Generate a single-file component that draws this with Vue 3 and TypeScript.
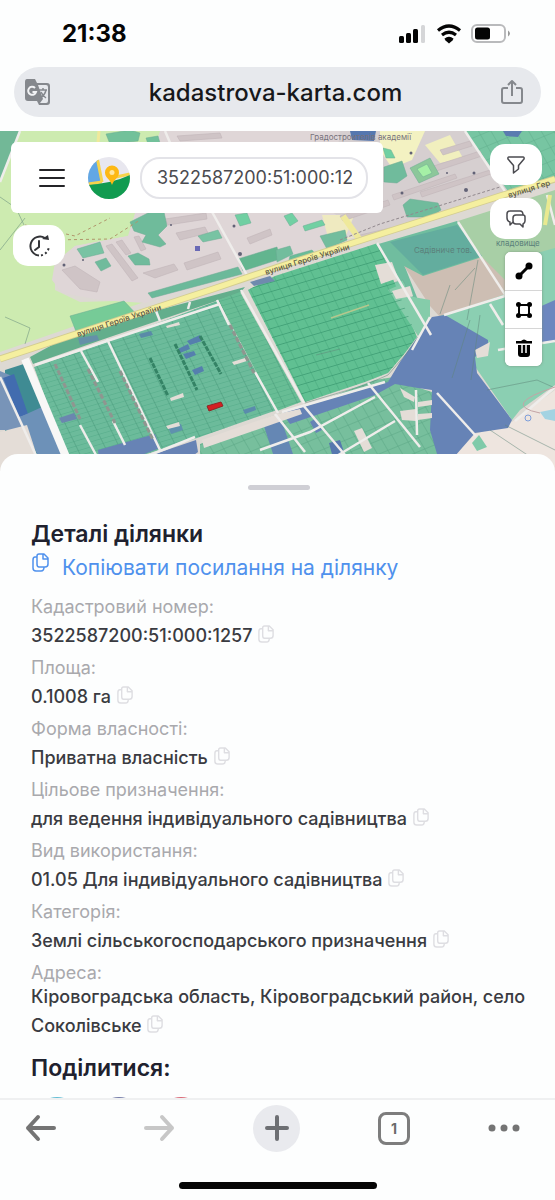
<script setup lang="ts">
import { ref } from 'vue'

interface Detail {
  id: string
  label: string
  value: string
}

interface Block {
  points: string
  fill: string
}

const cadastralNumber = ref('3522587200:51:000:1257')

const details: Detail[] = [
  { id: 'number', label: 'Кадастровий номер:', value: '3522587200:51:000:1257' },
  { id: 'area', label: 'Площа:', value: '0.1008 га' },
  { id: 'ownership', label: 'Форма власності:', value: 'Приватна власність' },
  { id: 'purpose', label: 'Цільове призначення:', value: 'для ведення індивідуального садівництва' },
  { id: 'use', label: 'Вид використання:', value: '01.05 Для індивідуального садівництва' },
  { id: 'category', label: 'Категорія:', value: 'Землі сільськогосподарського призначення' },
  { id: 'address', label: 'Адреса:', value: 'Кіровоградська область, Кіровоградський район, село Соколівське' },
]

const networks = [
  { id: 'telegram', name: 'Telegram' },
  { id: 'facebook', name: 'Facebook' },
  { id: 'pinterest', name: 'Pinterest' },
]

const terrain: Block[] = [
  { points: '0,131 165,131 200,131 150,210 140,215 128,236 75,246 55,265 55,290 80,302 150,300 0,352', fill: '#cdebb0' },
  { points: '0,131 20,131 0,180', fill: '#72b897' },
  { points: '128,236 75,246 55,262 52,280 62,293 100,300 145,303 275,262 365,235 385,131 160,131', fill: '#dfd6d7' },
  { points: '340,131 465,131 510,193 365,238 330,210', fill: '#d6cfd0' },
  { points: '380,131 425,131 412,160 392,168 380,150', fill: '#f3f2c2' },
  { points: '425,145 450,135 463,158 440,163', fill: '#f1efbe' },
  { points: '345,215 358,206 345,238 358,236 330,245 322,215', fill: '#efeac0' },
  { points: '465,131 555,131 555,178 510,194', fill: '#77c5a2' },
  { points: '458,221 555,190 555,265 508,284 482,258', fill: '#a8cfa6' },
  { points: '375,245 457,221 482,257 440,275 422,278 405,267 418,300 405,292', fill: '#70bd9f' },
  { points: '390,242 457,225 482,256 423,275', fill: '#63ad9e' },
  { points: '404,266 423,276 482,257 508,283 508,300 440,317 430,306', fill: '#cdbeb3' },
  { points: '440,316 555,278 555,385 520,410 512,420', fill: '#8bcfb2' },
  { points: '510,320 555,300 555,342 538,343', fill: '#6d87bf' },
  { points: '530,255 555,248 555,280 530,290', fill: '#8bcfb2' },
  { points: '512,422 555,390 555,471 440,471 475,434', fill: '#eee5df' },
  { points: '540,412 555,409 555,421 545,419', fill: '#a3d3e2' },
]

const greens: Block[] = [
  { points: '130,222 150,212 164,212 167,226 158,235 166,244 160,247 142,242 146,235 134,231', fill: '#6fbb9b' },
  { points: '106,134 130,130 140,133 138,141 110,144', fill: '#72c19a' },
  { points: '146,138 158,136 160,143 148,144', fill: '#72c19a' },
  { points: '77,249 100,242 104,253 83,258', fill: '#78c3a3' },
  { points: '95,262 106,258 111,266 101,271', fill: '#70bb9c' },
  { points: '128,256 138,253 149,259 150,265 135,265', fill: '#70bb9c' },
  { points: '198,236 218,230 222,238 203,242', fill: '#78c3a3' },
  { points: '235,215 247,213 251,223 240,226', fill: '#70cfa2' },
  { points: '148,293 238,267 242,274 152,298', fill: '#6bb99a' },
  { points: '238,259 277,247 280,259 243,271', fill: '#62b58f' },
  { points: '384,167 402,161 407,176 397,183 384,182', fill: '#70bb9c' },
  { points: '403,205 410,199 438,203 441,210 430,217 407,217', fill: '#70bb9c' },
  { points: '303,226 322,220 325,225 305,231', fill: '#71d0a3' },
  { points: '284,216 292,213 298,221 290,226', fill: '#71d0a3' },
  { points: '410,168 430,158 439,174 419,183', fill: '#8cc79a' },
  { points: '417,169 427,164 432,173 423,177', fill: '#a5f0a6' },
  { points: '383,148 391,150 395,158 386,158', fill: '#70d0a2' },
  { points: '70,316 124,301 140,318 77,334', fill: '#76cb97' },
  { points: '320,236 345,230 347,240 327,249', fill: '#72bd9d' },
  { points: '276,250 290,246 293,254 277,262', fill: '#72bd9d' },
  { points: '290,256 312,250 316,255 288,264', fill: '#69bc98' },
  { points: '386,285 403,280 407,290 393,294', fill: '#7fcaa9' },
]

const buildings = [
  '62,270 75,266 100,282 97,292 80,289', '106,246 112,244 138,278 132,281',
  '116,242 122,240 131,253 126,255', '134,237 139,236 146,249 141,251',
  '143,273 174,264 178,270 155,278', '176,233 205,227 208,233 180,240',
  '184,263 218,252 221,259 187,270', '165,219 206,213 207,219 168,225',
  '247,238 270,229 272,235 250,244', '177,136 220,133 222,138 180,141',
  '392,195 455,174 457,178 394,200', '415,172 480,151 482,156 418,177',
  '420,192 490,170 491,174 422,197', '440,150 470,141 472,146 443,155',
  '340,216 388,200 390,205 343,221', '360,235 390,228 391,232 362,239',
]

const fields: Block[] = [
  { points: '5,370 30,362 65,471 5,471', fill: '#3f8b93' },
  { points: '30,357 76,332 245,287 240,293 107,338 33,364', fill: '#63ae8c' },
  { points: '34,367 78,352 107,342 217,301 277,410 197,438 93,471 72,471', fill: '#6cbb9b' },
  { points: '218,300 240,292 301,402 277,411', fill: '#68bd95' },
  { points: '248,290 275,276 378,243 417,337 405,353 388,373 365,382 305,402', fill: '#60c092' },
  { points: '388,290 404,283 408,296 430,300 430,320 418,336', fill: '#85ccaa' },
  { points: '200,444 275,415 302,408 375,380 400,376 420,388 440,395 440,471 200,471', fill: '#77bf9d' },
]

const blues: Block[] = [
  { points: '0,371 12,376 33,430 0,430', fill: '#7894b8' },
  { points: '3,378 14,374 28,414 19,417', fill: '#426caf' },
  { points: '20,417 42,407 68,460 40,460', fill: '#6d91b8' },
  { points: '59,418 74,413 77,419 62,423', fill: '#6b86af' },
  { points: '139,334 151,331 153,335 141,338', fill: '#5a8aa8' },
  { points: '187,341 200,335 202,341 190,345', fill: '#557fae' },
  { points: '178,349 188,344 190,349 180,353', fill: '#557fae' },
  { points: '183,354 194,351 196,355 186,359', fill: '#557fae' },
  { points: '192,370 202,366 204,371 195,375', fill: '#557fae' },
  { points: '243,410 255,406 256,410 245,414', fill: '#5a8bac' },
  { points: '168,427 181,424 183,430 171,434', fill: '#5f91ae' },
  { points: '78,338 97,335 99,340 80,345', fill: '#6590a8' },
  { points: '98,450 155,434 160,448 100,471', fill: '#6783b5' },
  { points: '152,455 196,440 198,452 190,458 150,458', fill: '#6783b5' },
  { points: '263,423 280,416 295,460 275,460', fill: '#6587b4' },
  { points: '282,413 388,382 400,362 432,317 445,315 488,340 488,347 475,357 477,373 512,420 508,428 475,433 442,471 430,430 432,390 418,388 395,384 375,395 290,424', fill: '#6683b6' },
  { points: '310,422 316,418 322,430 316,433', fill: '#6683b6' },
  { points: '329,443 340,440 345,455 333,458', fill: '#5678ae' },
  { points: '250,282 270,276 275,281 254,286', fill: '#6f8aae' },
  { points: '350,131 376,131 374,141 352,140', fill: '#5577af' },
  { points: '503,131 522,131 518,137 506,136', fill: '#5a7bb0' },
]

const paleParcels = [
  '170,398 183,393 184,397 171,401', '166,426 179,422 180,426 168,429',
  '232,362 245,358 247,361 234,365', '166,326 179,322 180,325 167,328',
  '202,440 277,414 300,409 302,414 204,448', '375,265 392,262 398,278 381,284',
  '392,291 410,286 413,296 396,299', '400,388 415,397 414,402 404,397',
  '400,411 416,409 416,421 402,420', '418,402 432,400 432,405 418,407',
  '418,414 432,413 432,418 418,420', '354,431 362,428 372,448 364,452',
  '0,432 27,425 42,471 0,471', '475,350 490,342 488,356 477,358',
]

const whiteRoads = [
  'M25,359 L72,471', 'M35,365 L107,341 L220,304', 'M81,351 L98,382', 'M107,339 L160,450',
  'M80,425 L96,455', 'M113,421 L125,445', 'M0,377 L38,460', 'M217,300 L229,325',
  'M255,372 L278,413', 'M241,290 L304,403', 'M165,131 L180,166', 'M211,210 L248,277',
  'M377,243 L431,335', 'M465,131 L512,202', 'M490,304 L503,325', 'M368,383 L420,447',
  'M282,412 L385,382', 'M416,390 L417,435', 'M437,393 L476,436', 'M303,405 L345,455',
  'M375,397 L310,432 L260,450', 'M395,421 L335,457', 'M275,414 L305,452', 'M498,350 L555,341',
  'M555,387 L515,421', 'M547,195 L555,225', 'M20,131 L0,182', 'M188,309 L190,302', 'M156,311 L160,321',
  'M458,222 L515,310', 'M444,315 L505,296', 'M145,457 L195,437', 'M430,317 L412,350',
]

const accessTracks = [
  'M55,364 L80,419', 'M88,369 L115,423', 'M120,371 L153,440', 'M230,325 L254,373',
]

const thinLines = [
  'M5,317 L30,328 L25,344', 'M0,197 L16,208 L24,225', 'M0,250 L25,218', 'M487,390 L537,380 L555,388',
  'M490,430 L535,460', 'M505,425 L555,450', 'M480,315 L471,380', 'M470,320 L452,378',
  'M340,349 L316,355', 'M388,375 L406,354 L418,337', 'M305,403 L365,385 L388,375',
  'M467,320 L478,260', 'M455,290 L475,268', 'M450,285 L440,314',
]
</script>

<template>
  <div class="phone">
    <header class="browser-top">
      <div class="status">
        <span class="clock">21:38</span>
        <svg class="status-icons" viewBox="0 0 116 24" aria-hidden="true">
          <g fill="#050505">
            <rect x="0" y="14" width="5" height="7" rx="1.5" />
            <rect x="7" y="11" width="5" height="10" rx="1.5" />
            <rect x="14" y="7" width="5" height="14" rx="1.5" />
            <rect x="22" y="3" width="4" height="18" rx="1.5" fill="#d5d6d8" />
            <path d="M46,18 L50,14.7 L54,18 L50,21.5 Z" />
          </g>
          <path d="M39,8.5 Q50,-.5 61,8.500 M43,13 Q50,7.500 57,13" fill="none" stroke="#050505" stroke-width="3.200" />
          <path d="M46,17.500 Q50,14 54,17.500" fill="none" stroke="#050505" stroke-width="2" />
          <rect x="73" y="3" width="33" height="17" rx="5" fill="#fff" stroke="#b9babc" stroke-width="2" />
          <rect x="76" y="5.500" width="15" height="12" rx="2.500" fill="#050505" />
          <path d="M109,8.500 q4,3 0,6 z" fill="#999" />
        </svg>
      </div>
      <div class="address">
        <button class="plain" aria-label="Перекласти">
          <svg width="28" height="28" viewBox="0 0 28 28">
            <path d="M3,1 h8 l2,4 h10 q3,0 3,3 v16 q0,3 -3,3 h-8 l-2,-4 H4 q-3,0 -3,-3 V4 q0,-3 2,-3 z" fill="#85888d" />
            <path d="M14,7 h8 q2,0 2,2 v14 q0,2 -2,2 h-6 l3,-4 z" fill="#e7e9ed" />
            <path d="M11,10 A4,4 0 1 0 12,14 H8.500" fill="none" stroke="#f2f3f5" stroke-width="2" />
            <path d="M15,12 h8 M19,10 v2 M22,12 q-1,5 -6,8 M17,14 q2,4 5,6" fill="none" stroke="#85888d" stroke-width="1.500" />
          </svg>
        </button>
        <span class="site">kadastrova-karta.com</span>
        <button class="plain" aria-label="Поширити">
          <svg width="26" height="28" viewBox="0 0 26 28" fill="none" stroke="#85888d" stroke-width="2" stroke-linejoin="round">
            <path d="M9,10 H5 q-2,0 -2,2 V23 q0,2 2,2 H21 q2,0 2,-2 V12 q0,-2 -2,-2 H17 M13,18 V3 M9,7 L13,3 L17,7" />
          </svg>
        </button>
      </div>
    </header>

    <main class="content">
      <section class="map" aria-label="Кадастрова карта">
        <svg class="map-canvas" viewBox="0 131 555 340" preserveAspectRatio="xMidYMin slice">
          <defs>
            <pattern id="plots" width="13" height="5" patternUnits="userSpaceOnUse" patternTransform="matrix(.96 -.28 .44 .9 0 0)">
              <path d="M0,0 H13" stroke="#3c9c78" stroke-width=".7" />
              <path d="M0,0 V5" stroke="#3d8d70" stroke-width="1" />
            </pattern>
            <pattern id="gardens" width="9" height="9" patternUnits="userSpaceOnUse" patternTransform="matrix(.96 -.28 .44 .9 0 0)">
              <path d="M0,0 H9" stroke="#27855f" stroke-width="1.200" />
              <path d="M0,0 V9" stroke="#35996e" stroke-width=".8" />
            </pattern>
            <pattern id="yards" width="11" height="13" patternUnits="userSpaceOnUse" patternTransform="matrix(.92 -.38 .5 .86 0 0)">
              <path d="M0,0 H11 M0,0 V13" stroke="#4d9b7b" stroke-width=".9" />
            </pattern>
          </defs>
          <rect y="131" width="555" height="340" fill="#ddd9d3" />
          <polygon v-for="(b, i) in terrain" :key="`t${i}`" :points="b.points" :fill="b.fill" />
          <polygon v-for="(p, i) in buildings" :key="`b${i}`" :points="p" fill="#cfc4c6" stroke="#c1b5b8" stroke-width=".6" />
          <polygon v-for="(b, i) in greens" :key="`g${i}`" :points="b.points" :fill="b.fill" stroke="#6bab92" stroke-width=".5" />
          <polygon points="465,131 555,131 555,178 510,194" fill="url(#yards)" opacity=".6" />
          <polygon v-for="(b, i) in fields" :key="`f${i}`" :points="b.points" :fill="b.fill" />
          <g opacity=".75">
            <polygon :points="fields[2].points" fill="url(#plots)" />
            <polygon :points="fields[3].points" fill="url(#plots)" />
            <polygon :points="fields[4].points" fill="url(#gardens)" />
            <polygon :points="fields[6].points" fill="url(#yards)" />
          </g>
          <polygon v-for="(b, i) in blues" :key="`u${i}`" :points="b.points" :fill="b.fill" />
          <polygon v-for="(p, i) in paleParcels" :key="`p${i}`" :points="p" fill="#e4ddd7" />
          <polygon points="472,443 479,435 487,447 477,451" fill="#7fcaa9" />
          <g fill="none" stroke="#5f8579" stroke-width=".7" opacity=".7">
            <path v-for="(d, i) in thinLines" :key="`l${i}`" :d="d" />
          </g>
          <g fill="none" stroke="#efedeb" stroke-width="2.500">
            <path v-for="(d, i) in whiteRoads" :key="`r${i}`" :d="d" />
          </g>
          <path d="M25,359 L72,471" stroke="#f8f7f6" stroke-width="8" />
          <g fill="none" stroke="#8f9690" stroke-width="3" stroke-dasharray="5 2">
            <path v-for="(d, i) in accessTracks" :key="`a${i}`" :d="d" />
          </g>
          <path d="M150,358 L168,396 M175,344 L197,390 M200,336 L221,374" stroke="#348365" stroke-width="3" stroke-dasharray="5 1" />
          <path d="M331,318 L369,305" stroke="#b5c78e" stroke-width="1.500" />
          <path d="M343,216 L360,240" stroke="#efe99b" stroke-width="6" />
          <path d="M545,225 L550,195" stroke="#e9e990" stroke-width="4" />
          <path d="M95,178 L99,131" stroke="#efe99b" stroke-width="3" />
          <g fill="none">
            <path d="M0,359 L213,289 L275,268 L365,239 L500,196 L555,179" stroke="#d3cd90" stroke-width="7" />
            <path d="M0,359 L213,289 L275,268 L365,239 L500,196 L555,179" stroke="#f5ef9f" stroke-width="5" />
            <path d="M340,240 L380,224 L500,187" stroke="#91888d" stroke-width="1" stroke-dasharray="3 2" />
            <path d="M25,225 L75,236 L110,218 M50,240 L110,239 L140,220" stroke="#b0956b" stroke-width="1" stroke-dasharray="3 3" />
            <path d="M540,413 Q500,405 555,387" stroke="#c4a4a6" stroke-width="1" />
            <circle cx="528" cy="418" r="3" stroke="#7c9edb" />
          </g>
          <g class="street">
            <text transform="translate(78 337) rotate(-18)">вулиця Героїв України</text>
            <text transform="translate(266 275) rotate(-17)">вулиця Героїв України</text>
            <text transform="translate(509 198) rotate(-17)">вулиця Гер</text>
          </g>
          <text class="place" x="310" y="140">Градостроителів академії</text>
          <text class="place small" x="496" y="246">кладовище</text>
          <text class="place small" x="414" y="253">Садівниче тов.</text>
          <path d="M207,406 L221,402 L223,406 L209,411 Z" fill="#d51f22" stroke="#8d2826" />
          <g fill="#626276">
            <circle cx="64" cy="265" r="1.500" /><circle cx="83" cy="260" r="1" /><circle cx="171" cy="225" r="1" />
            <circle cx="234" cy="226" r="1.500" /><circle cx="240" cy="254" r="2" /><circle cx="411" cy="153" r="1.500" />
            <circle cx="474" cy="173" r="1.500" /><circle cx="466" cy="190" r="2" /><circle cx="402" cy="193" r="1.500" />
            <circle cx="447" cy="173" r="1" /><rect x="195" y="246" width="5" height="5" fill="#6969b5" />
          </g>
        </svg>

        <div class="map-ui">
          <div class="left-tools">
            <form class="search" @submit.prevent>
              <button class="plain" type="button" aria-label="Меню">
                <svg width="26" height="20" viewBox="0 0 26 20" stroke="#242428" stroke-width="2" stroke-linecap="round">
                  <path d="M1,2 H25 M1,10 H25 M1,18 H25" />
                </svg>
              </button>
              <svg class="logo" viewBox="0 0 42 42" aria-hidden="true">
                <defs><clipPath id="disc"><circle cx="21" cy="21" r="21" /></clipPath></defs>
                <g clip-path="url(#disc)">
                  <rect width="42" height="42" fill="#e8e7ef" />
                  <path d="M0,0 H10 L14,26 L0,30 Z" fill="#62a7e4" />
                  <path d="M9,0 L14,25 M0,27 L14,25 M28,20 L42,17" fill="none" stroke="#f6d34c" stroke-width="3" />
                  <path d="M0,28 Q25,26 42,18 V42 H0 Z" fill="#119b50" />
                  <path d="M24,28 C22,22 17,21 17,15.500 a7,7 0 0 1 14,0 C31,21 26,22 24,28 Z" fill="#fdb813" />
                  <circle cx="24" cy="15.500" r="2.500" fill="#ffe7a0" />
                </g>
              </svg>
              <input v-model="cadastralNumber" type="text" aria-label="Кадастровий номер ділянки" />
            </form>
            <button class="bubble" aria-label="Історія">
              <svg width="26" height="26" viewBox="0 0 26 26" fill="none" stroke="#333438" stroke-width="2">
                <path d="M19,5 A9.500,9.500 0 1 0 13,22.500" />
                <path d="M15,22.500 A10,10 0 0 0 23,13" stroke-dasharray="2 2.500" />
                <path d="M13,8 V14 L9,17" stroke-linecap="round" />
                <path d="M16,6 L23,7 L22,2 Z" fill="#333438" stroke="none" />
              </svg>
            </button>
          </div>
          <div class="right-tools">
            <button class="bubble" aria-label="Фільтр">
              <svg width="20" height="20" viewBox="0 0 20 20" fill="none" stroke="#4b4b50" stroke-width="1.500" stroke-linejoin="round">
                <path d="M3,2 H17 Q18.500,2 18,4 L12.500,10.500 V14 L7.500,18 V10.500 L2,4 Q1.500,2 3,2 Z" />
              </svg>
            </button>
            <button class="bubble" aria-label="Повідомлення">
              <svg width="22" height="20" viewBox="0 0 22 20" fill="none" stroke="#4b4b50" stroke-width="1.500" stroke-linejoin="round">
                <path d="M8,13 L5,16 V13 Q2,12 2,9 V5 Q2,2 5,2 H15 Q18,2 18,6" />
                <path d="M11,6 H18 Q20,6 20,8 V12 Q20,14 18,15 V18 L15,15 H11 Q8,15 8,12 V9 Q8,6 11,6 Z" />
              </svg>
            </button>
            <div class="draw-tools">
              <button aria-label="Виміряти відстань">
                <svg width="18" height="18" viewBox="0 0 18 18"><path d="M4,14 L14,4" stroke="#050505" stroke-width="3" /><circle cx="4" cy="14" r="3.500" /><circle cx="14" cy="4" r="3.500" /></svg>
              </button>
              <button aria-label="Виміряти площу">
                <svg width="18" height="18" viewBox="0 0 18 18"><path d="M4,4 H14 V14 H4 Z" fill="none" stroke="#050505" stroke-width="2" /><circle cx="3.500" cy="3.500" r="2.500" /><circle cx="14.500" cy="3.500" r="2.500" /><circle cx="3.500" cy="14.500" r="2.500" /><circle cx="14.500" cy="14.500" r="2.500" /></svg>
              </button>
              <button aria-label="Видалити">
                <svg width="18" height="20" viewBox="0 0 18 20"><path d="M3,7 H15 V16 Q15,19 12,19 H6 Q3,19 3,16 Z M1,3 H6 Q9,0 12,3 H17 V5.500 H1 Z" /><path d="M7,7 V15 M11,7 V15" stroke="#fff" stroke-width="1.500" /></svg>
              </button>
            </div>
          </div>
        </div>
      </section>

      <section class="sheet">
        <div class="grip"></div>
        <h1>Деталі ділянки</h1>
        <a class="copy-link" href="#dilyanka">
          <svg width="19" height="22" viewBox="0 0 19 22"><use href="#copy-shape" /></svg>
          <span>Копіювати посилання на ділянку</span>
        </a>
        <svg class="symbols" width="0" height="0" aria-hidden="true">
          <g id="copy-shape" fill="none" stroke="currentColor" stroke-width="1.500" stroke-linejoin="round">
            <path d="M8,2 H13 L17,6 V12 Q17,15 14,15 H8 Q6,15 6,12 V4 Q6,2 8,2 Z M12,2 V7 H17" />
            <path d="M6,5 H4 Q2,5 2,8 V16 Q2,19 5,19 H10 Q13,19 13,15" />
          </g>
        </svg>
        <dl>
          <template v-for="item in details" :key="item.id">
            <dt>{{ item.label }}</dt>
            <dd>
              {{ item.value }}
              <button class="copy" :aria-label="`Копіювати: ${item.label}`">
                <svg width="18" height="21" viewBox="0 0 19 22"><use href="#copy-shape" /></svg>
              </button>
            </dd>
          </template>
        </dl>
        <h2>Поділитися:</h2>
        <div class="networks">
          <a v-for="n in networks" :key="n.id" :class="n.id" href="#share" :aria-label="n.name"></a>
        </div>
      </section>
    </main>

    <footer class="browser-bottom">
      <nav>
        <button class="plain back" aria-label="Назад">
          <svg width="32" height="28" viewBox="0 0 32 28" fill="none" stroke="#747474" stroke-width="4" stroke-linecap="round" stroke-linejoin="round"><path d="M13,3 L3,14 L13,25 M3,14 H29" /></svg>
        </button>
        <button class="plain" aria-label="Вперед">
          <svg width="32" height="28" viewBox="0 0 32 28" fill="none" stroke="#c7c7c7" stroke-width="4" stroke-linecap="round" stroke-linejoin="round"><path d="M19,3 L29,14 L19,25 M3,14 H29" /></svg>
        </button>
        <button class="plain new-tab" aria-label="Нова вкладка">
          <svg width="26" height="26" viewBox="0 0 26 26" stroke="#6d6f73" stroke-width="4" stroke-linecap="round"><path d="M13,2 V24 M3,13 H23" /></svg>
        </button>
        <button class="plain tabs" aria-label="Вкладки"><span>1</span></button>
        <button class="plain" aria-label="Більше">
          <svg width="32" height="8" viewBox="0 0 32 8" fill="#747474"><circle cx="4" cy="4" r="3.500" /><circle cx="16" cy="4" r="3.500" /><circle cx="28" cy="4" r="3.500" /></svg>
        </button>
      </nav>
      <div class="home"></div>
    </footer>
  </div>
</template>

<style>
body {
  margin: 0;
  background: #fff;
}
</style>

<style scoped>
.phone {
  display: flex;
  flex-direction: column;
  height: 100vh;
  overflow: hidden;
  background: #fdfefe;
  color: #3a3b41;
  font-family: Inter, "Liberation Sans", sans-serif;
}
button {
  font: inherit;
  color: inherit;
  border: 0;
  padding: 0;
  cursor: pointer;
}
svg {
  display: block;
  flex-shrink: 0;
}
.plain {
  display: flex;
  align-items: center;
  justify-content: center;
  background: none;
}
.browser-top {
  padding-bottom: 14px;
}
.status {
  display: flex;
  align-items: center;
  justify-content: space-between;
  height: 67px;
  padding: 0 40px 0 62px;
}
.clock {
  color: #050505;
  font-size: 24px;
  font-weight: 700;
}
.status-icons {
  width: 116px;
  height: 24px;
}
.address {
  display: flex;
  align-items: center;
  justify-content: space-between;
  height: 50px;
  margin: 0 14px;
  padding: 0 16px 0 10px;
  border-radius: 25px;
  background: #e7e9ed;
}
.site {
  color: #17181b;
  font-size: 24px;
  font-weight: 500;
}
.content {
  flex: 1;
  min-height: 0;
  overflow: hidden;
}
.map {
  position: relative;
  height: 340px;
  overflow: hidden;
}
.map-canvas {
  width: 100%;
  height: 100%;
}
.street {
  fill: #595746;
  font-size: 8px;
  font-weight: 500;
}
.place {
  fill: #77727c;
  font-size: 8px;
}
.small {
  fill: #5b817b;
}
.map-ui {
  position: absolute;
  inset: 0;
  display: flex;
  justify-content: space-between;
  align-items: flex-start;
  padding: 11px 13px 0 11px;
}
.left-tools {
  display: flex;
  flex-direction: column;
  gap: 12px;
}
.search {
  display: flex;
  align-items: center;
  box-sizing: border-box;
  width: 372px;
  height: 71px;
  padding: 0 15px 0 28px;
  border-radius: 6px;
  background: #fff;
}
.logo {
  width: 42px;
  height: 42px;
  margin: 0 10px 0 23px;
}
.search input {
  flex: 1;
  min-width: 0;
  box-sizing: border-box;
  height: 42px;
  padding: 0 14px 0 15px;
  border: 2px solid #e3e3e8;
  border-radius: 20px;
  background: #fff;
  color: #4b4b50;
  font-family: inherit;
  font-size: 18px;
}
.bubble {
  display: flex;
  align-items: center;
  justify-content: center;
  width: 52px;
  height: 41px;
  border-radius: 15px;
  background: #fff;
}
.left-tools .bubble {
  margin-left: 2px;
}
.right-tools {
  display: flex;
  flex-direction: column;
  align-items: flex-end;
  gap: 13px;
  padding-top: 2px;
}
.draw-tools {
  display: flex;
  flex-direction: column;
  overflow: hidden;
  border-radius: 6px;
  box-shadow: 0 0 2px 1px #78907e66;
  background: #fff;
}
.draw-tools button {
  display: flex;
  align-items: center;
  justify-content: center;
  width: 37px;
  height: 38px;
  background: #fff;
}
.draw-tools button + button {
  border-top: 1px solid #d6d6d6;
}
.sheet {
  position: relative;
  margin-top: -17px;
  padding: 31px 28px 0 31px;
  border-radius: 18px 18px 0 0;
  background: #fdfefe;
}
.grip {
  width: 62px;
  height: 5px;
  margin: 0 auto;
  border-radius: 3px;
  background: #cfcfd5;
}
h1,
h2 {
  margin: 0;
  color: #20212e;
  font-size: 23px;
  font-weight: 600;
  line-height: 28px;
}
h1 {
  margin-top: 30px;
}
.copy-link {
  display: flex;
  gap: 12px;
  height: 40px;
  margin-bottom: 7px;
  color: #4f91ed;
  font-size: 21px;
  line-height: 40px;
  text-decoration: none;
}
.copy-link svg {
  margin-top: 4px;
}
.symbols {
  position: absolute;
}
dl {
  margin: 0;
  font-size: 18px;
  line-height: 24px;
}
dt {
  color: #a9a9ad;
}
dd {
  margin: 0;
  font-weight: 500;
}
.copy {
  display: inline-block;
  height: 37px;
  padding: 0 0 8px;
  vertical-align: middle;
  color: #dedee2;
  background: none;
}
.copy svg {
  display: inline-block;
  vertical-align: middle;
}
h2 {
  margin-top: 8px;
}
.networks {
  display: flex;
  gap: 14px;
  margin-top: 15px;
  padding-left: 2px;
}
.networks a {
  width: 48px;
  height: 48px;
  border-radius: 50%;
}
.telegram {
  background: #63bdd4;
}
.facebook {
  background: #757da8;
}
.pinterest {
  background: #d96977;
}
.browser-bottom {
  position: relative;
  box-sizing: border-box;
  height: 102px;
  border-top: 2px solid #eff0f1;
  background: #fdfefe;
}
nav {
  display: flex;
  align-items: center;
  justify-content: space-between;
  height: 56px;
  padding: 0 35px 0 25px;
}
nav .back {
  width: 40px;
  justify-content: flex-start;
}
.new-tab {
  width: 47px;
  height: 47px;
  border-radius: 50%;
  background: #e9eaee;
}
nav .tabs {
  box-sizing: border-box;
  width: 32px;
  height: 33px;
  border: 3px solid #7d7d7d;
  border-radius: 8px;
  color: #6b6b6b;
  font-size: 14px;
  font-weight: 700;
}
.home {
  width: 198px;
  height: 7px;
  margin: 26px auto 0;
  border-radius: 4px;
  background: #050505;
}
</style>
